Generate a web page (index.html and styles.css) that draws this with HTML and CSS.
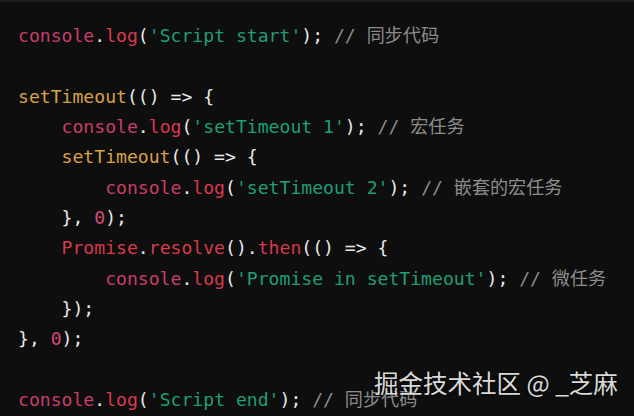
FILE: index.html
```html
<!DOCTYPE html>
<html lang="zh">
<head>
<meta charset="utf-8">
<link rel="stylesheet" href="styles.css">
</head>
<body>
<div class="code-block">
<pre class="code"><code><span class="fn">console</span>.<span class="mt">log</span>(<span class="str">'Script start'</span>); <span class="cm">// 同步代码</span>

<span class="kw">setTimeout</span>(() =&gt; {
    <span class="fn">console</span>.<span class="mt">log</span>(<span class="str">'setTimeout 1'</span>); <span class="cm">// 宏任务</span>
    <span class="kw">setTimeout</span>(() =&gt; {
        <span class="fn">console</span>.<span class="mt">log</span>(<span class="str">'setTimeout 2'</span>); <span class="cm">// 嵌套的宏任务</span>
    }, <span class="num">0</span>);
    <span class="mt">Promise</span>.<span class="mt">resolve</span>().<span class="mt">then</span>(() =&gt; {
        <span class="fn">console</span>.<span class="mt">log</span>(<span class="str">'Promise in setTimeout'</span>); <span class="cm">// 微任务</span>
    });
}, <span class="num">0</span>);

<span class="fn">console</span>.<span class="mt">log</span>(<span class="str">'Script end'</span>); <span class="cm">// 同步代码</span></code></pre>
<div class="watermark">掘金技术社区 @ _芝麻</div>
</div>
</body>
</html>
```
FILE: styles.css
```css
html, body {
  margin: 0;
  padding: 0;
  background: #0e0e0e;
}
.code-block {
  position: relative;
  width: 634px;
  height: 416px;
  overflow: hidden;
  background: #0e0e0e;
  border-top: 2px solid #1b1b1b;
  box-sizing: border-box;
}
.code {
  margin: 0;
  padding: 19px 0 0 18px;
  font-family: "DejaVu Sans Mono", "Noto Sans CJK SC", monospace;
  font-size: 18.1px;
  line-height: 30.35px;
  color: #e8e8e8;
  white-space: pre;
}
.fn { color: #c93d66; }
.mt { color: #d83a4c; }
.kw { color: #d9a148; }
.str { color: #1f9e77; }
.num { color: #d6467c; }
.cm {
  color: #8c8c8c;
  font-family: "DejaVu Sans Mono", "Noto Sans CJK SC", monospace;
}
.watermark {
  position: absolute;
  left: 374px;
  top: 365px;
  font-family: "Noto Sans CJK SC", sans-serif;
  font-size: 24.5px;
  line-height: 32px;
  color: rgba(240, 240, 240, 0.92);
  text-shadow: 0 0 3px rgba(0, 0, 0, 0.6);
  white-space: nowrap;
}
```
